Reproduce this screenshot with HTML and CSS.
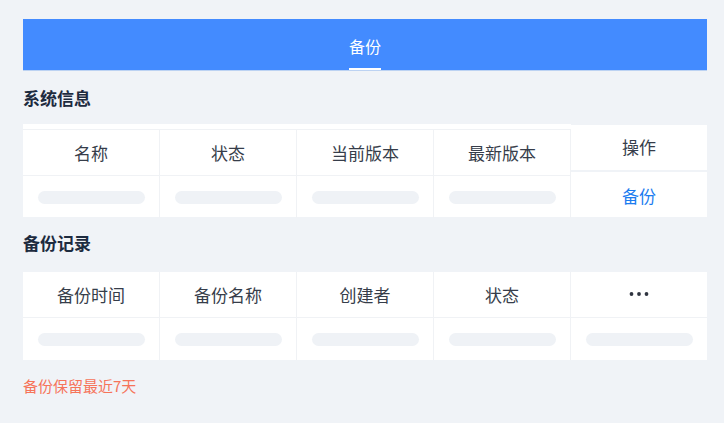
FILE: index.html
```html
<!DOCTYPE html>
<html lang="zh">
<head>
<meta charset="utf-8">
<link rel="stylesheet" href="styles.css">
</head>
<body>
<div class="page">
  <div class="tabbar">
    <div class="tab active">备份</div>
  </div>

  <h2 class="section-title">系统信息</h2>
  <div class="table-fixed">
    <div class="scroll-part">
      <div class="grid4">
        <div class="th">名称</div>
        <div class="th">状态</div>
        <div class="th">当前版本</div>
        <div class="th">最新版本</div>
        <div class="td"><span class="skel"></span></div>
        <div class="td"><span class="skel"></span></div>
        <div class="td"><span class="skel"></span></div>
        <div class="td"><span class="skel"></span></div>
      </div>
    </div>
    <div class="fixed-part">
      <div class="fth">操作</div>
      <div class="ftd"><a class="link">备份</a></div>
    </div>
  </div>

  <h2 class="section-title second">备份记录</h2>
  <div class="grid5">
    <div class="th">备份时间</div>
    <div class="th">备份名称</div>
    <div class="th">创建者</div>
    <div class="th">状态</div>
    <div class="th">
      <svg class="more" width="20" height="6" viewBox="0 0 20 6"><circle cx="2.5" cy="3" r="1.9"/><circle cx="10" cy="3" r="1.9"/><circle cx="17.5" cy="3" r="1.9"/></svg>
    </div>
    <div class="td"><span class="skel"></span></div>
    <div class="td"><span class="skel"></span></div>
    <div class="td"><span class="skel"></span></div>
    <div class="td"><span class="skel"></span></div>
    <div class="td"><span class="skel"></span></div>
  </div>

  <p class="note">备份保留最近7天</p>
</div>
</body>
</html>
```
FILE: styles.css
```css
* { box-sizing: border-box; }
html, body { margin: 0; padding: 0; }
body {
  background: #f0f3f7;
  font-family: "Noto Sans CJK SC", "Noto Sans", sans-serif;
  color: #333a47;
}
.page {
  width: 724px;
  padding: 19px 17px 0 23px;
}
.tabbar {
  height: 52px;
  background: #438bff;
  border-bottom: 1px solid #bcd2f2;
  display: flex;
  justify-content: center;
}
.tab {
  color: #fff;
  font-size: 16px;
  line-height: 20px;
  padding-top: 17px;
  position: relative;
  height: 51px;
}
.tab.active::after {
  content: "";
  position: absolute;
  left: 0;
  right: 0;
  bottom: 0;
  height: 2px;
  background: #fff;
}
.section-title {
  margin: 0;
  padding-top: 15px;
  height: 53px;
  font-size: 17px;
  line-height: 24px;
  font-weight: 700;
  color: #1d2b3f;
}
.section-title.second {
  padding-top: 14px;
  height: 55px;
}
.table-fixed {
  display: flex;
  width: 684px;
  height: 93px;
}
.scroll-part {
  width: 548px;
  background: #fff;
  padding-top: 5px;
}
.grid4 {
  display: grid;
  grid-template-columns: repeat(4, 137px);
  grid-template-rows: 46px 42px;
  border-top: 1px solid #f0f2f5;
}
.grid5 {
  display: grid;
  grid-template-columns: 137px 137px 137px 137px 136px;
  grid-template-rows: 46px 42px;
  width: 684px;
  background: #fff;
}
.th, .td {
  display: flex;
  align-items: center;
  justify-content: center;
  border-right: 1px solid #f0f2f5;
}
.grid5 .th:nth-child(5), .grid5 .td:nth-child(10) { border-right: none; }
.th {
  font-size: 17px;
  border-bottom: 1px solid #f0f2f5;
  color: #363d4a;
}
.td { padding: 0 14px 0 15px; }
.skel {
  display: block;
  width: 107px;
  height: 13px;
  border-radius: 7px;
  background: #eff2f6;
}
.fixed-part {
  width: 136px;
  padding-top: 1px;
  display: flex;
  flex-direction: column;
  gap: 2px;
}
.fth, .ftd {
  background: #fff;
  display: flex;
  align-items: center;
  justify-content: center;
  height: 45px;
  font-size: 17px;
  color: #363d4a;
}
.fth { padding-bottom: 2px; }
.link {
  color: #1b7cf0;
  font-size: 17px;
  padding-top: 2px;
}
.more { fill: #2f3440; display: block; margin-top: -2px; }
.note {
  margin: 0;
  padding-top: 16px;
  font-size: 15px;
  line-height: 20px;
  color: #f6745a;
}
```
